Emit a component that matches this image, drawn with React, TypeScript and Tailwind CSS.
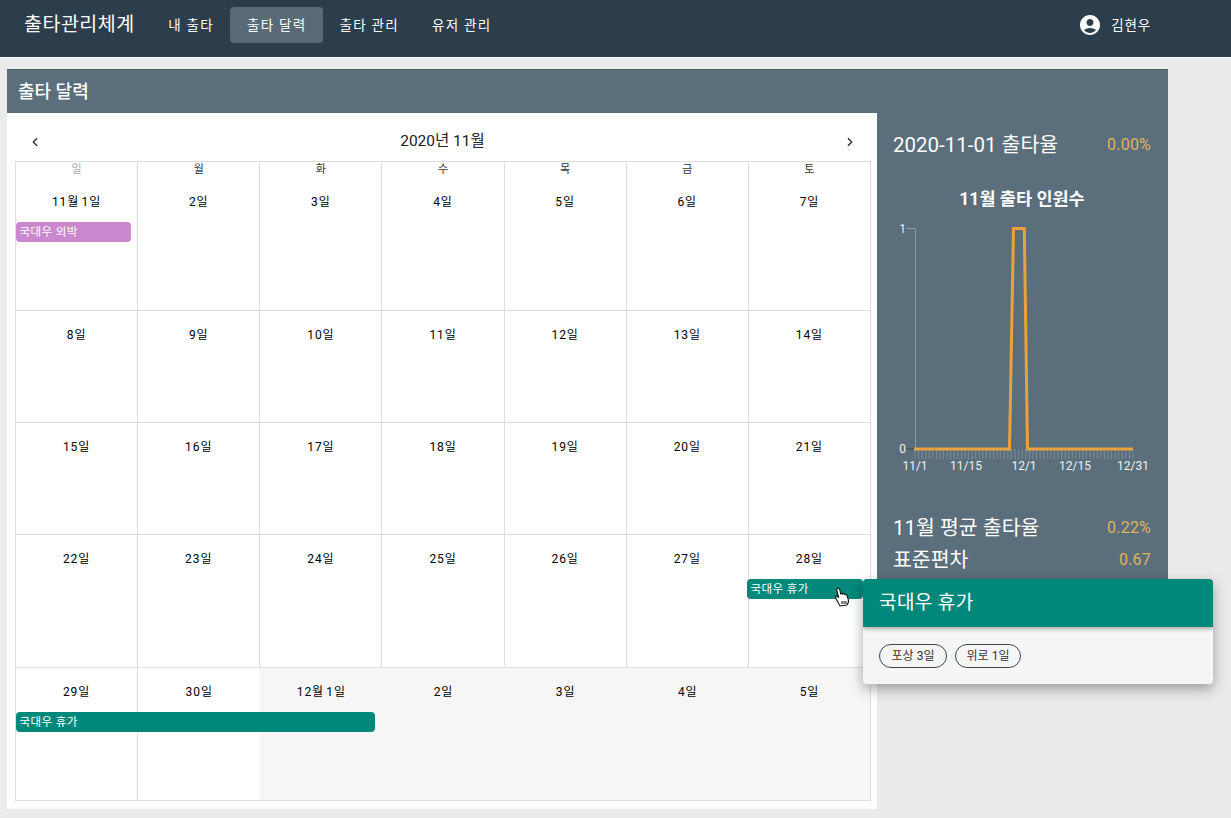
import { ChevronLeft, ChevronRight } from 'lucide-react';
import { MdAccountCircle } from 'react-icons/md';

const FONT = "font-['Roboto','Noto_Sans_CJK_KR',sans-serif]";

const NAV_ITEMS = ['내 출타', '출타 달력', '출타 관리', '유저 관리'];
const WEEK_DAYS = ['일', '월', '화', '수', '목', '금', '토'];

interface CalEvent {
  label: string;
  className: string;
}

interface Week {
  heightClass: string;
  days: string[];
  otherMonthFrom?: number;
  event?: CalEvent;
}

const TEAL = 'bg-[#00897b]';

const WEEKS: Week[] = [
  {
    heightClass: 'h-[149px]',
    days: ['11월 1일', '2일', '3일', '4일', '5일', '6일', '7일'],
    event: { label: '국대우 외박', className: 'left-0 top-[60px] w-[115px] bg-[#ca88d0]' },
  },
  { heightClass: 'h-[112px]', days: ['8일', '9일', '10일', '11일', '12일', '13일', '14일'] },
  { heightClass: 'h-[112px]', days: ['15일', '16일', '17일', '18일', '19일', '20일', '21일'] },
  {
    heightClass: 'h-[133px]',
    days: ['22일', '23일', '24일', '25일', '26일', '27일', '28일'],
    event: { label: '국대우 휴가', className: `left-[731px] top-[44px] w-[116px] ${TEAL}` },
  },
  {
    heightClass: 'h-[133px]',
    days: ['29일', '30일', '12월 1일', '2일', '3일', '4일', '5일'],
    otherMonthFrom: 2,
    event: { label: '국대우 휴가', className: `left-0 top-[44px] w-[359px] ${TEAL}` },
  },
];

function Navbar() {
  return (
    <div className="flex h-[58px] items-center border-b border-[#f7f7f7] bg-[#2c3e4b] pb-[7px] pl-[24px] text-white">
      <div className="mr-[17px] text-[19.5px] leading-none tracking-[0.5px]">출타관리체계</div>
      <div className="flex items-center">
        {NAV_ITEMS.map((item, i) => (
          <div
            key={item}
            className={`flex h-[36px] items-center justify-center rounded-[4px] px-[16.5px] text-[13.5px] tracking-[1.3px] ${
              i === 1 ? 'bg-[#596a76]' : ''
            }`}
          >
            {item}
          </div>
        ))}
      </div>
      <div className="ml-auto flex items-center pr-[80px]">
        <MdAccountCircle size={24} className="mr-[9px]" />
        <span className="text-[13.5px] tracking-[0.8px]">김현우</span>
      </div>
    </div>
  );
}

function WeekRow({ week, first }: { week: Week; first: boolean }) {
  const from = week.otherMonthFrom;
  return (
    <div className={`relative grid grid-cols-7 ${week.heightClass}`}>
      {week.days.map((day, i) => {
        const other = from !== undefined && i >= from;
        // the shaded days have no lines between them, nor against the last white day
        const noRightLine = from !== undefined && i >= from - 1 && i < 6;
        return (
          <div
            key={day}
            className={`flex flex-col items-center border-b border-[#dedede] ${
              other ? 'bg-[#f6f6f6]' : 'bg-white'
            } ${noRightLine ? '' : 'border-r'}`}
          >
            {first && (
              <div className={`h-[16px] pt-[1px] text-[11px] leading-[14px] ${i === 0 ? 'text-[#a8a8a8]' : 'text-[#333]'}`}>
                {WEEK_DAYS[i]}
              </div>
            )}
            <div className="pt-[16px] text-[12px] leading-[16px] tracking-[0.9px] [word-spacing:-1.5px] text-black">{day}</div>
          </div>
        );
      })}
      {week.event && (
        <div
          className={`absolute h-[20px] rounded-[4px] pl-[3.5px] text-[11.5px] leading-[20px] tracking-[0.4px] text-white ${week.event.className}`}
        >
          {week.event.label}
        </div>
      )}
    </div>
  );
}

function Calendar() {
  return (
    <div className="h-[696px] w-[870px] shrink-0 bg-white pl-[8px]">
      <div className="flex h-[48px] w-[856px] items-center justify-between pt-[10px] pr-[14px] pl-[13px] text-[#222]">
        <ChevronLeft size={14} strokeWidth={2} />
        <div className="text-[15.5px] leading-none">2020년 11월</div>
        <ChevronRight size={14} strokeWidth={2} />
      </div>
      <div className="w-[856px] border-t border-l border-[#dedede]">
        {WEEKS.map((week, i) => (
          <WeekRow key={i} week={week} first={i === 0} />
        ))}
      </div>
    </div>
  );
}

function AttendanceChart() {
  const ticks = Array.from({ length: 62 }, (_, i) => 38 + i * (218 / 61));
  const labels: [string, number][] = [
    ['11/1', 38],
    ['11/15', 89],
    ['12/1', 147],
    ['12/15', 198],
    ['12/31', 256],
  ];
  return (
    <svg width="291" height="258" className="block" fontFamily="Roboto, sans-serif">
      <path d="M29 7.500H38.500V228" fill="none" stroke="#8c9aa4" strokeWidth="1" />
      <path d="M29 228H38" stroke="#3c4d59" strokeWidth="1" />
      {ticks.map(x => (
        <line key={x} x1={x} x2={x} y1="228" y2="238" stroke="#8592a0" strokeWidth="1" opacity="0.8" />
      ))}
      <path
        d="M37 228H132.500L136.500 7.500H147.300L150.500 228H256"
        fill="none"
        stroke="#eba23c"
        strokeWidth="3"
        strokeLinejoin="miter"
      />
      <text x="29" y="11.500" textAnchor="end" fontSize="12" fill="#eef1f2">1</text>
      <text x="29" y="232" textAnchor="end" fontSize="12" fill="#eef1f2">0</text>
      {labels.map(([label, x]) => (
        <text key={label} x={x} y="249" textAnchor="middle" fontSize="12" fill="#eef1f2">
          {label}
        </text>
      ))}
    </svg>
  );
}

function StatRow({ label, value, className }: { label: string; value: string; className: string }) {
  return (
    <div className={`flex items-center justify-between pr-[17px] pl-[16px] ${className}`}>
      <span className="text-[20.5px] leading-[32px] text-white">{label}</span>
      <span className="text-[16px] leading-[32px] tracking-[0.2px] text-[#e3b35b]">{value}</span>
    </div>
  );
}

function SidePanel() {
  return (
    <div className="h-[490px] w-[291px] shrink-0 bg-[#5a6e7b] pt-[16px]">
      <StatRow label="2020-11-01 출타율" value="0.00%" className="" />
      <div className="pt-[26px] pr-[1px] text-center text-[17.5px] leading-[24px] font-bold text-white">11월 출타 인원수</div>
      <div className="pt-[10px]">
        <AttendanceChart />
      </div>
      <StatRow label="11월 평균 출타율" value="0.22%" className="pt-[33px]" />
      <StatRow label="표준편차" value="0.67" className="" />
    </div>
  );
}

function Popover() {
  return (
    <div className="absolute top-[579px] left-[863px] w-[350px] overflow-hidden rounded-[4px] bg-[#f5f5f5] shadow-[0_5px_14px_rgba(0,0,0,0.35)]">
      <div className="flex h-[48px] items-center bg-[#00897b] pt-[1px] pl-[16px] text-[19px] tracking-[0.4px] text-white shadow-[0_2px_4px_rgba(0,0,0,0.3)]">
        국대우 휴가
      </div>
      <div className="flex h-[57px] items-center gap-[8px] pl-[16px]">
        <span className="flex h-[24px] w-[68px] items-center justify-center rounded-full border border-[#37474f] text-[12px] text-[#333]">
          포상 3일
        </span>
        <span className="flex h-[24px] w-[66px] items-center justify-center rounded-full border border-[#37474f] text-[12px] text-[#333]">
          위로 1일
        </span>
      </div>
    </div>
  );
}

function HandCursor() {
  return (
    <svg width="16" height="20" viewBox="0 0 16 20" className="absolute top-[587px] left-[834px]">
      <path
        d="M3.500 1.500c1-.6 2 0 2.200 1l1 4.300c.5-.6 1.600-.5 2 .2.500-.5 1.600-.4 2 .4.600-.4 1.600-.2 2 .6l1.600 4.400c.5 1.600.2 3-.5 4.100l-.8 1.500-7 1-1-1.700L1.700 11c-.5-.7-.2-1.500.5-1.800.6-.2 1.300 0 1.800.6l.7.9L2.700 3c-.2-.6.200-1.200.8-1.500z"
        fill="#fff"
        stroke="#111"
        strokeWidth="1.1"
      />
      <path d="M8 14v3M10 14v3M12 14v3" stroke="#111" strokeWidth="1" />
    </svg>
  );
}

export default function App() {
  return (
    <div className={`relative h-[818px] w-[1231px] overflow-hidden bg-[#ebebeb] ${FONT}`}>
      <Navbar />
      <div className="w-[1168px] pt-[11px] pl-[7px]">
        <div className="flex h-[44px] items-center border-t border-[#4d606d] bg-[#5a6e7b] pb-[1px] pl-[11px] text-[18px] font-medium text-white">
          출타 달력
        </div>
        <div className="flex items-start">
          <Calendar />
          <SidePanel />
        </div>
      </div>
      <Popover />
      <HandCursor />
    </div>
  );
}
